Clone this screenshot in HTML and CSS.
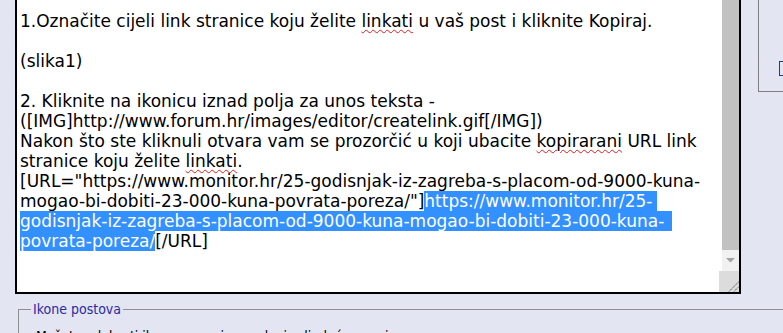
FILE: index.html
```html
<!DOCTYPE html>
<html lang="hr">
<head>
<meta charset="utf-8">
<title>Editor</title>
<link rel="stylesheet" href="styles.css">
</head>
<body>
<div class="top">
  <div class="editor">
    <div class="text">
      <div class="line">1.Označite cijeli link stranice koju želite <span class="sp">linkati</span> u vaš post i kliknite Kopiraj.</div>
      <div class="line"></div>
      <div class="line">(slika1)</div>
      <div class="line"></div>
      <div class="line">2. Kliknite na ikonicu iznad polja za unos teksta -</div>
      <div class="line">([IMG]http://www.forum.hr/images/editor/createlink.gif[/IMG])</div>
      <div class="line">Nakon što ste kliknuli otvara vam se prozorčić u koji ubacite <span class="sp">kopirarani</span> URL link</div>
      <div class="line">stranice koju želite <span class="sp">linkati</span>.</div>
      <div class="line">[URL="https://www.monitor.hr/25-godisnjak-iz-zagreba-s-placom-od-9000-kuna-</div>
      <div class="line">mogao-bi-dobiti-23-000-kuna-povrata-poreza/"]<span class="sel tail1">https://www.monitor.hr/25-</span></div>
      <div class="line"><span class="sel tail2">godisnjak-iz-zagreba-s-placom-od-9000-kuna-mogao-bi-dobiti-23-000-kuna-</span></div>
      <div class="line"><span class="sel">povrata-poreza/</span>[/URL]</div>
    </div>
    <div class="sbar">
      <div class="track">
        <div class="thumb"></div>
        <div class="arrow"><svg width="9" height="5" viewBox="0 0 9 5"><polygon points="0,0 9,0 4.5,4.5" fill="#a3a3a3"/></svg></div>
      </div>
      <div class="resizer"><svg width="20" height="21" viewBox="0 0 20 21"><line x1="10" y1="20.5" x2="20" y2="10.5" stroke="#4a4a4a" stroke-width="1" stroke-dasharray="1.4 0.8"/><line x1="15" y1="20.5" x2="20" y2="15.5" stroke="#4a4a4a" stroke-width="1" stroke-dasharray="1.4 0.8"/></svg></div>
    </div>
  </div>
  <div class="side"><div class="btn"></div></div>
</div>
<fieldset class="icons">
  <legend>Ikone postova</legend>
  <p>Možete odabrati ikonu za svoju poruku iz sljedećeg popisa:</p>
</fieldset>
</body>
</html>
```
FILE: styles.css
```css
html, body {
  margin: 0;
  padding: 0;
  background: #e3e5f3;
  width: 783px;
  height: 333px;
  overflow: hidden;
}

.top {
  display: flex;
  align-items: flex-start;
}

.editor {
  flex: 0 0 auto;
  margin-left: 15px;
  width: 726px;
  height: 294px;
  box-sizing: border-box;
  border: 2px solid #000;
  border-top: 0;
  background: #fff;
  display: flex;
}

.text {
  flex: 1;
  min-width: 0;
  padding: 11px 0 0 3px;
  font-family: "DejaVu Sans", sans-serif;
  font-size: 17px;
  line-height: 20px;
  color: #000;
  overflow: hidden;
}

.line {
  height: 20px;
  white-space: pre;
}

.sel {
  background: #3390ff;
  color: #fff;
}

.tail1 { padding-right: 5px; }
.tail2 { padding-right: 8px; }

.sp {
  text-decoration: underline wavy #e01b1b;
  text-decoration-thickness: 1px;
  text-underline-offset: 2px;
}

.sbar {
  flex: 0 0 20px;
  display: flex;
  flex-direction: column;
}

.track {
  flex: 1;
  margin-left: 3px;
  background: #f1f1f1;
  display: flex;
  flex-direction: column;
}

.thumb {
  height: 250px;
  background: #c1c1c1;
}

.arrow {
  height: 21px;
  display: flex;
  align-items: center;
  justify-content: center;
}

.arrow svg, .resizer svg { display: block; }

.resizer {
  height: 21px;
  background: #dcdcdc;
}

.side {
  margin-left: 17px;
  flex: 1 0 60px;
  height: 92px;
  box-sizing: border-box;
  border-left: 1px solid #808080;
  border-bottom: 1px solid #808080;
  padding: 61px 0 0 20px;
}

.btn {
  width: 40px;
  height: 15px;
  box-sizing: border-box;
  border: 1px solid #1b3f8b;
}

.icons {
  margin: 7px -40px 0 18px;
  padding: 11px 12px 10px;
  border: 1px solid #8f8f8f;
  font-family: "DejaVu Sans Condensed", "DejaVu Sans", sans-serif;
  font-size: 14px;
}

.icons legend {
  padding: 0 2px;
  color: #2b2b9e;
}

.icons p {
  margin: 0;
  padding-left: 5px;
  line-height: 16px;
  color: #000;
}
```
